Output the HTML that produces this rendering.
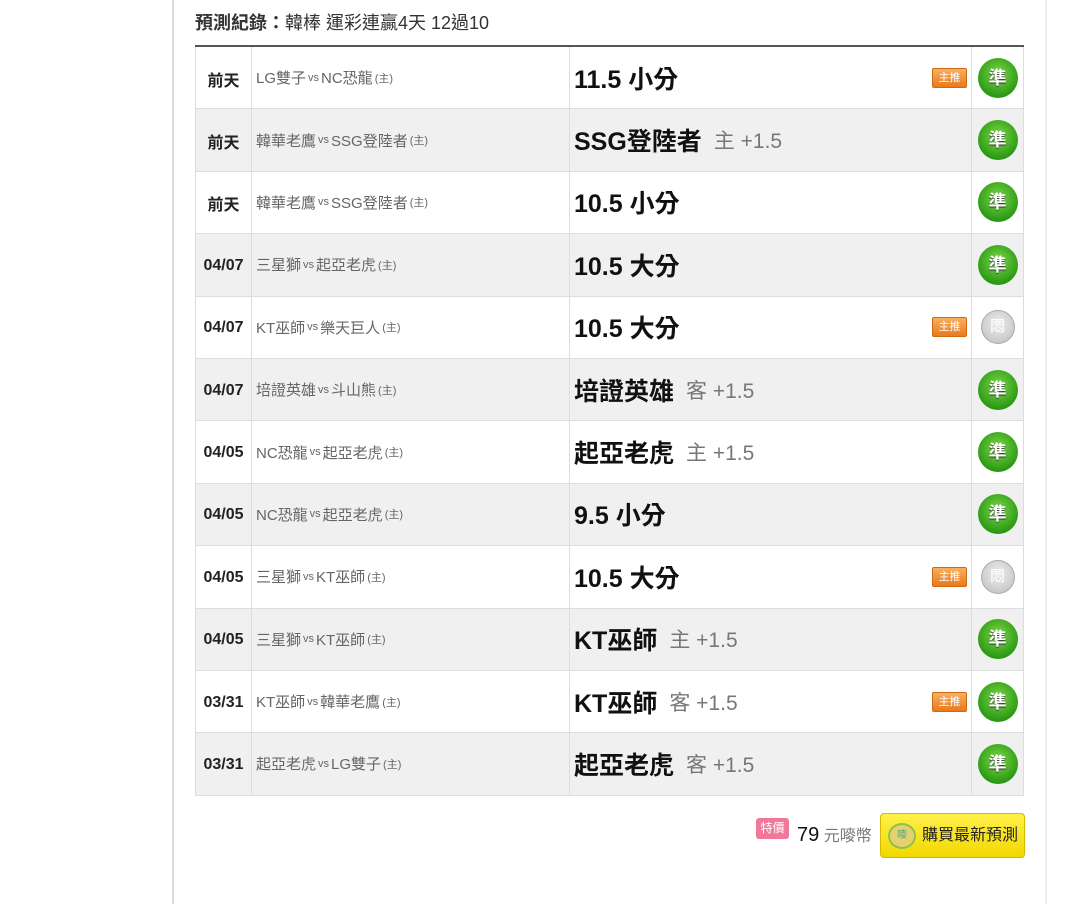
<!DOCTYPE html>
<html><head><meta charset="utf-8"><style>
body{margin:0;width:1080px;height:904px;background:#fff;font-family:"Liberation Sans","Noto Sans CJK TC",sans-serif;position:relative;overflow:hidden}
.l{position:absolute;left:172px;top:0;width:2px;height:904px;background:#ddd}
.r{position:absolute;left:1045px;top:0;width:2px;height:904px;background:#eee}
.h{position:absolute;left:195px;top:9px;font-size:18px;color:#333}
.h b{font-weight:bold}
table{position:absolute;left:195px;top:45px;width:829px;border-collapse:collapse;border-top:2px solid #555;table-layout:fixed}
td{border:1px solid #ddd;height:61.4px;padding:0;vertical-align:middle}
td>div{display:flex;align-items:center;height:61px;white-space:nowrap}
tr:nth-child(even) td{background:#f0f0f0}
.d{width:55px}
.d div{justify-content:center;font-weight:bold;font-size:16px;color:#222;padding-top:2px;box-sizing:border-box}
.m{width:317px}
.m div{padding-left:4px;font-size:15px;color:#666}
.m small{font-size:11px;margin:0 2px}
.p{width:401px}
.p div{padding-left:4px;font-size:25px;font-weight:bold;color:#111;position:relative}
.p span{font-weight:normal;color:#777;font-size:21px;margin-left:12px}
.tag{position:absolute;right:4px;top:50%;margin-top:-10px;width:33px;height:18px;background:linear-gradient(#f7b060,#e8791c);border:1px solid #d06a10;color:#fff;font-size:11px;text-align:center;line-height:18px;border-radius:2px;font-weight:normal;font-style:normal}
.c div{justify-content:center}
.g{display:inline-block;width:40px;height:40px;border-radius:50%;background:radial-gradient(circle at 50% 40%,#7cd84a,#2d9a14 70%,#1a7a0a);color:#fff;font-weight:bold;font-size:18px;line-height:40px;text-align:center;text-shadow:0 1px 1px #333}
.y{display:inline-block;width:32px;height:32px;border-radius:50%;background:radial-gradient(circle at 50% 40%,#eee,#bbb);border:1px solid #aaa;color:#fff;font-size:15px;line-height:32px;text-align:center}
.b{position:absolute;left:756px;top:818px;width:33px;height:21px;background:#f07898;color:#fff;font-size:12px;text-align:center;line-height:21px;border-radius:3px}
.pr{position:absolute;left:797px;top:822px;font-size:20px;color:#111}
.pr span{font-size:16px;color:#777}
.btn{position:absolute;left:880px;top:813px;width:145px;height:45px;background:linear-gradient(#fff04a,#f2d800);border:1px solid #d6b800;border-radius:4px;font-size:16px;color:#222;line-height:43px;box-sizing:border-box}
.btn i{position:absolute;left:7px;top:9px;width:24px;height:22px;border-radius:50%;background:#e6d070;border:2px solid #8bc34a;font-style:normal;font-size:10px;line-height:22px;text-align:center;color:#4a8}
.btn b{position:absolute;left:41px;font-weight:normal}
</style></head><body>
<div class="l"></div><div class="r"></div>
<div class="h"><b>預測紀錄：</b>韓棒 運彩連贏4天 12過10</div>
<table>
<tr><td class="d"><div>前天</div></td><td class="m"><div>LG雙子<small>vs</small>NC恐龍<small>(主)</small></div></td><td class="p"><div>11.5 小分<em class="tag">主推</em></div></td><td class="c"><div><span class="g">準</span></div></td></tr>
<tr><td class="d"><div>前天</div></td><td class="m"><div>韓華老鷹<small>vs</small>SSG登陸者<small>(主)</small></div></td><td class="p"><div>SSG登陸者<span>主 +1.5</span></div></td><td class="c"><div><span class="g">準</span></div></td></tr>
<tr><td class="d"><div>前天</div></td><td class="m"><div>韓華老鷹<small>vs</small>SSG登陸者<small>(主)</small></div></td><td class="p"><div>10.5 小分</div></td><td class="c"><div><span class="g">準</span></div></td></tr>
<tr><td class="d"><div>04/07</div></td><td class="m"><div>三星獅<small>vs</small>起亞老虎<small>(主)</small></div></td><td class="p"><div>10.5 大分</div></td><td class="c"><div><span class="g">準</span></div></td></tr>
<tr><td class="d"><div>04/07</div></td><td class="m"><div>KT巫師<small>vs</small>樂天巨人<small>(主)</small></div></td><td class="p"><div>10.5 大分<em class="tag">主推</em></div></td><td class="c"><div><span class="y">悶</span></div></td></tr>
<tr><td class="d"><div>04/07</div></td><td class="m"><div>培證英雄<small>vs</small>斗山熊<small>(主)</small></div></td><td class="p"><div>培證英雄<span>客 +1.5</span></div></td><td class="c"><div><span class="g">準</span></div></td></tr>
<tr><td class="d"><div>04/05</div></td><td class="m"><div>NC恐龍<small>vs</small>起亞老虎<small>(主)</small></div></td><td class="p"><div>起亞老虎<span>主 +1.5</span></div></td><td class="c"><div><span class="g">準</span></div></td></tr>
<tr><td class="d"><div>04/05</div></td><td class="m"><div>NC恐龍<small>vs</small>起亞老虎<small>(主)</small></div></td><td class="p"><div>9.5 小分</div></td><td class="c"><div><span class="g">準</span></div></td></tr>
<tr><td class="d"><div>04/05</div></td><td class="m"><div>三星獅<small>vs</small>KT巫師<small>(主)</small></div></td><td class="p"><div>10.5 大分<em class="tag">主推</em></div></td><td class="c"><div><span class="y">悶</span></div></td></tr>
<tr><td class="d"><div>04/05</div></td><td class="m"><div>三星獅<small>vs</small>KT巫師<small>(主)</small></div></td><td class="p"><div>KT巫師<span>主 +1.5</span></div></td><td class="c"><div><span class="g">準</span></div></td></tr>
<tr><td class="d"><div>03/31</div></td><td class="m"><div>KT巫師<small>vs</small>韓華老鷹<small>(主)</small></div></td><td class="p"><div>KT巫師<span>客 +1.5</span><em class="tag">主推</em></div></td><td class="c"><div><span class="g">準</span></div></td></tr>
<tr><td class="d"><div>03/31</div></td><td class="m"><div>起亞老虎<small>vs</small>LG雙子<small>(主)</small></div></td><td class="p"><div>起亞老虎<span>客 +1.5</span></div></td><td class="c"><div><span class="g">準</span></div></td></tr>
</table>
<div class="b">特價</div>
<div class="pr">79<span> 元嘜幣</span></div>
<div class="btn"><i>嘜</i><b>購買最新預測</b></div>
</body></html>
